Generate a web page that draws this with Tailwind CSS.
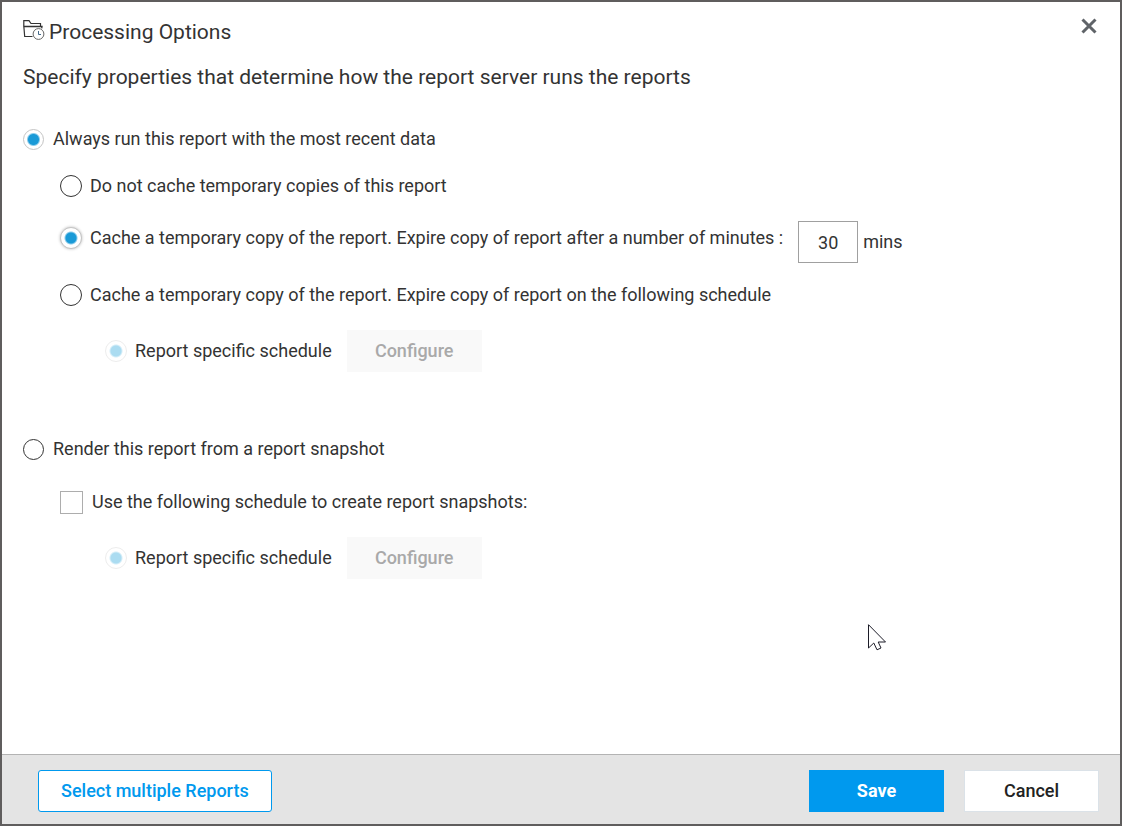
<!DOCTYPE html>
<html lang="en">
<head>
  <meta charset="UTF-8">
  <meta name="viewport" content="width=device-width, initial-scale=1.0">
  <title>Processing Options</title>
  <script src="https://cdn.jsdelivr.net/npm/@tailwindcss/browser@4"></script>
</head>
<body class="bg-white font-['Roboto',sans-serif] text-[#333]">
  <div class="relative min-h-screen flex flex-col border-2 border-[#5f5d5d]">

    <!-- Header -->
    <header class="flex items-start justify-between pl-[21px] pr-5 pt-[18px]">
      <h1 class="flex items-center gap-1 text-[21px] leading-6">
        <svg class="w-[22px] h-6" viewBox="0 0 22 24" fill="none" stroke="#333">
          <path d="M9.500 16.500H1.700L.8 6V.7H6L8 3.500H17.500V6.500" stroke-width="1.200"/>
          <path d="M.8 6.500H19L18.700 8.300" stroke-width="1.300"/>
          <circle cx="15.500" cy="14" r="5.400" stroke="#666" stroke-width="1"/>
          <path d="M15.500 11v3.500H18" stroke="#456a8a"/>
        </svg>
        Processing Options
      </h1>
      <button type="button" aria-label="Close" onclick="closeDialog()" class="w-[22px] h-6 -mt-1.5 flex items-center justify-center">
        <svg class="w-4 h-4" viewBox="0 0 16 16" fill="none" stroke="#5f6368" stroke-width="3">
          <path d="M1.500 1.500l13 13M14.500 1.500l-13 13"/>
        </svg>
      </button>
    </header>

    <!-- Options -->
    <main class="grow pl-[21px] pr-5 text-lg leading-6">
      <p class="mt-[21px] text-[21px] leading-6">Specify properties that determine how the report server runs the reports</p>

      <label class="flex w-fit items-center gap-[9px] mt-[38px]">
        <input type="radio" name="mode" value="live" checked class="appearance-none size-[21px] rounded-full border border-[#333] bg-white checked:border-[#c4c4c4] checked:bg-[radial-gradient(circle,#1a9ad7_5px,transparent_7px)]">
        Always run this report with the most recent data
      </label>

      <div class="pl-[37px]">
        <label class="flex w-fit items-center gap-2 mt-[23px]">
          <input type="radio" name="cache" value="none" class="appearance-none size-[22px] rounded-full border border-[#333] bg-white checked:border-[#c4c4c4] checked:bg-[radial-gradient(circle,#1a9ad7_5px,transparent_7px)]">
          Do not cache temporary copies of this report
        </label>

        <div class="flex items-start mt-[23px]">
          <label class="flex items-center gap-2 mt-[5px]">
            <input type="radio" name="cache" value="minutes" checked class="appearance-none size-[22px] rounded-full border border-[#333] bg-white checked:border-[#c4c4c4] checked:shadow-[0_0_3px_#bbb] checked:bg-[radial-gradient(circle,#1a9ad7_5px,transparent_7px)]">
            Cache a temporary copy of the report. Expire copy of report after a number of minutes :
          </label>
          <label class="flex items-center gap-[5px] ml-[15px]">
            <input type="text" value="30" aria-label="Minutes" class="w-[60px] h-[42px] border border-[#a0a0a0] bg-white text-center">
            mins
          </label>
        </div>

        <label class="flex w-fit items-center gap-2 mt-5">
          <input type="radio" name="cache" value="schedule" class="appearance-none size-[22px] rounded-full border border-[#333] bg-white checked:border-[#c4c4c4] checked:bg-[radial-gradient(circle,#1a9ad7_5px,transparent_7px)]">
          Cache a temporary copy of the report. Expire copy of report on the following schedule
        </label>

        <div class="flex items-center gap-[15px] pl-[45px] mt-[23px]">
          <label class="flex items-center gap-2">
            <input type="radio" name="cacheSchedule" checked disabled class="appearance-none size-[22px] rounded-full border border-[#ededed] bg-white bg-[radial-gradient(circle,#abdcf1_5px,transparent_7px)]">
            Report specific schedule
          </label>
          <button type="button" disabled class="w-[135px] h-[42px] bg-[#f9f9f9] text-[#a9a9a9] font-medium">Configure</button>
        </div>
      </div>

      <label class="flex w-fit items-center gap-[9px] mt-[65px]">
        <input type="radio" name="mode" value="snapshot" class="appearance-none size-[21px] rounded-full border border-[#333] bg-white checked:border-[#c4c4c4] checked:bg-[radial-gradient(circle,#1a9ad7_5px,transparent_7px)]">
        Render this report from a report snapshot
      </label>

      <div class="pl-[37px]">
        <label class="flex w-fit items-center gap-[9px] mt-[29px]">
          <input type="checkbox" class="appearance-none size-[23px] border border-[#adadad] bg-white checked:bg-[#1a9ad7]">
          Use the following schedule to create report snapshots:
        </label>

        <div class="flex items-center gap-[15px] pl-[45px] mt-[23px]">
          <label class="flex items-center gap-2">
            <input type="radio" name="snapshotSchedule" checked disabled class="appearance-none size-[22px] rounded-full border border-[#ededed] bg-white bg-[radial-gradient(circle,#abdcf1_5px,transparent_7px)]">
            Report specific schedule
          </label>
          <button type="button" disabled class="w-[135px] h-[42px] bg-[#f9f9f9] text-[#a9a9a9] font-medium">Configure</button>
        </div>
      </div>
    </main>

    <!-- Footer -->
    <footer class="flex items-center gap-5 pt-[15px] pb-3 pl-9 pr-[21px] border-t border-[#b3b3b3] bg-[#e4e4e4] text-lg leading-6 font-medium">
      <button type="button" class="h-[42px] px-[22px] mr-auto rounded-[3px] border border-[#0099ee] bg-white text-[#0099ee]">Select multiple Reports</button>
      <button type="button" class="w-[135px] h-[42px] bg-[#0099ee] text-white font-bold">Save</button>
      <button type="button" onclick="closeDialog()" class="w-[135px] h-[42px] border border-[#dbe2e8] bg-white text-[#222]">Cancel</button>
    </footer>

    <!-- Mouse pointer -->
    <svg class="absolute left-[865px] top-[621px] w-5 h-7" viewBox="0 0 20 28" fill="#fff" stroke="#1c1c28" stroke-width="1">
      <path d="M1.500 1.700V25L6.800 20L10 26.800L14 25L11.200 19H18.500Z"/>
    </svg>
  </div>

  <script>
    // Close button and Cancel both leave the dialog
    function closeDialog() {
      window.history.back();
    }
  </script>
</body>
</html>
